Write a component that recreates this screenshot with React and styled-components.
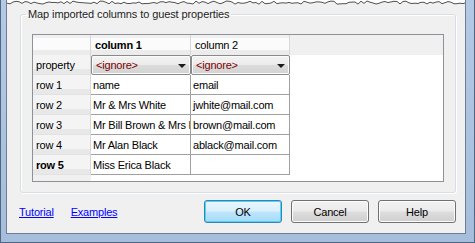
import React from "react";
import styled, { createGlobalStyle } from "styled-components";

const GlobalStyle = createGlobalStyle`
  html, body {
    margin: 0;
    padding: 0;
    background: #ffffff;
  }
  body {
    font-family: "Liberation Sans", Arial, sans-serif;
    font-size: 11px;
    letter-spacing: -0.2px;
    color: #000;
  }
`;

const Frame = styled.div`
  width: 475px;
  height: 243px;
  box-sizing: border-box;
  display: flex;
  flex-direction: column;
  padding: 0 8px 8px 5px;
  border: 1px solid #4f6685;
  border-top: none;
  background: linear-gradient(to bottom, #b4c9e3, #a6bedb);
`;

const Client = styled.div`
  flex: 1;
  display: flex;
  flex-direction: column;
  background: #f0f0f0;
  border: 1px solid #6b7f99;
  border-top: none;
  min-height: 0;
`;

const Tear = styled.svg`
  display: block;
  width: 100%;
  height: 6px;
  flex: none;
`;

const Body = styled.div`
  flex: 1;
  display: flex;
  flex-direction: column;
  padding: 0 9px 10px 13px;
`;

const GroupBox = styled.fieldset`
  margin: 0;
  padding: 12px 11px 10px 11px;
  min-width: 0;
  border: 1px solid #d5dfe5;
  border-radius: 3px;
  box-shadow: inset 1px 1px 0 #ffffff, 1px 1px 0 #ffffff;
`;

const Legend = styled.legend`
  margin-left: -6px;
  padding: 0 2px;
  line-height: 16px;
  letter-spacing: -0.1px;
  color: #1e1e1e;
`;

const Sheet = styled.div`
  height: 148px;
  box-sizing: border-box;
  border: 1px solid #8e9298;
  display: grid;
  grid-template-columns: 58px 100px 99px 1fr;
  grid-auto-rows: 20px;
  align-content: start;
  background: linear-gradient(to right, #f0f0f0 58px, #ffffff 58px);
  overflow: hidden;
`;

const HeadCell = styled.div`
  box-sizing: border-box;
  padding: 0 4px;
  display: flex;
  align-items: center;
  white-space: nowrap;
  overflow: hidden;
  font-weight: ${(p) => (p.$bold ? 700 : 400)};
  border-right: 1px solid #d8d8d8;
  background: linear-gradient(#f0f0f0 0 15%, #fbfbfb 15% 75%, #ececec 75%);
`;

const HeadFiller = styled.div`
  background: #f0f0f0;
`;

const RowHead = styled.div`
  box-sizing: border-box;
  padding: 0 3px;
  display: flex;
  align-items: center;
  white-space: nowrap;
  font-weight: ${(p) => (p.$bold ? 700 : 400)};
  border-right: 1px solid #d8d8d8;
  border-bottom: 1px solid #e2e2e2;
  background: linear-gradient(#f4f4f4 0 72%, #e8e8e8 72%);
`;

const Cell = styled.div`
  box-sizing: border-box;
  padding: 0 2px;
  display: flex;
  align-items: center;
  white-space: nowrap;
  overflow: hidden;
  background: #ffffff;
  border-right: 1px solid #a0a0a0;
  border-bottom: 1px solid #a0a0a0;
`;

const Blank = styled.div`
  background: #ffffff;
`;

const Combo = styled.div`
  box-sizing: border-box;
  display: flex;
  align-items: center;
  justify-content: space-between;
  padding: 0 4px 0 4px;
  border: 1px solid #8a8a8a;
  border-radius: 2px;
  box-shadow: inset 0 0 0 1px #fbfbfb;
  background: linear-gradient(#f3f3f3 0%, #ebebeb 48%, #dcdcdc 52%, #d2d2d2 100%);
  color: #800000;
`;

const Arrow = styled.span`
  width: 0;
  height: 0;
  border-left: 4px solid transparent;
  border-right: 4px solid transparent;
  border-top: 4px solid #1a1a1a;
  margin-top: 2px;
`;

const Footer = styled.div`
  display: flex;
  align-items: center;
  margin-top: 7px;
`;

const Links = styled.div`
  display: flex;
  gap: 17px;
  flex: 1;
  margin-left: -1px;
`;

const Link = styled.a`
  color: #0000ff;
  text-decoration: underline;
  cursor: pointer;
`;

const Buttons = styled.div`
  display: flex;
  gap: 9px;
`;

const Button = styled.button`
  width: 78px;
  height: 23px;
  box-sizing: border-box;
  font: inherit;
  letter-spacing: inherit;
  color: #000;
  border-radius: 3px;
  border: 1px solid ${(p) => (p.$default ? "#3c7fb1" : "#707070")};
  box-shadow: inset 0 0 0 1px ${(p) => (p.$default ? "#48d7f8" : "#fcfcfc")};
  background: ${(p) =>
    p.$default
      ? "linear-gradient(#eaf6fd 0%, #d9f0fc 48%, #bee6fd 52%, #a7d9f5 100%)"
      : "linear-gradient(#f2f2f2 0%, #ebebeb 48%, #dddddd 52%, #cfcfcf 100%)"};
  padding: 0;
`;

const tearPoints = (() => {
  let seed = 11;
  const pts = [];
  for (let x = 0; x <= 462; x += 3) {
    seed = (seed * 9301 + 49297) % 233280;
    const y = 1 + (seed / 233280) * 3.2;
    pts.push(`${x},${y.toFixed(1)}`);
  }
  return pts.join(" ");
})();

const rows = [
  { head: "row 1", c1: "name", c2: "email" },
  { head: "row 2", c1: "Mr & Mrs White", c2: "jwhite@mail.com" },
  { head: "row 3", c1: "Mr Bill Brown & Mrs Kate Brown", c2: "brown@mail.com" },
  { head: "row 4", c1: "Mr Alan Black", c2: "ablack@mail.com" },
  { head: "row 5", c1: "Miss Erica Black", c2: "", current: true },
];

export default function App() {
  return (
    <>
      <GlobalStyle />
      <Frame>
        <Client>
          <Tear viewBox="0 0 458 6" preserveAspectRatio="none">
            <polygon points={`0,0 ${tearPoints} 462,0`} fill="#ffffff" />
            <polyline points={tearPoints} fill="none" stroke="#505050" strokeWidth="1" />
          </Tear>
          <Body>
            <GroupBox>
              <Legend>Map imported columns to guest properties</Legend>
              <Sheet>
                <HeadCell />
                <HeadCell $bold>column 1</HeadCell>
                <HeadCell>column 2</HeadCell>
                <HeadFiller />

                <RowHead>property</RowHead>
                <Combo>
                  &lt;ignore&gt;
                  <Arrow />
                </Combo>
                <Combo>
                  &lt;ignore&gt;
                  <Arrow />
                </Combo>
                <Blank />

                {rows.map((r) => (
                  <React.Fragment key={r.head}>
                    <RowHead $bold={r.current}>{r.head}</RowHead>
                    <Cell>{r.c1}</Cell>
                    <Cell>{r.c2}</Cell>
                    <Blank />
                  </React.Fragment>
                ))}
              </Sheet>
            </GroupBox>
            <Footer>
              <Links>
                <Link>Tutorial</Link>
                <Link>Examples</Link>
              </Links>
              <Buttons>
                <Button $default>OK</Button>
                <Button>Cancel</Button>
                <Button>Help</Button>
              </Buttons>
            </Footer>
          </Body>
        </Client>
      </Frame>
    </>
  );
}
